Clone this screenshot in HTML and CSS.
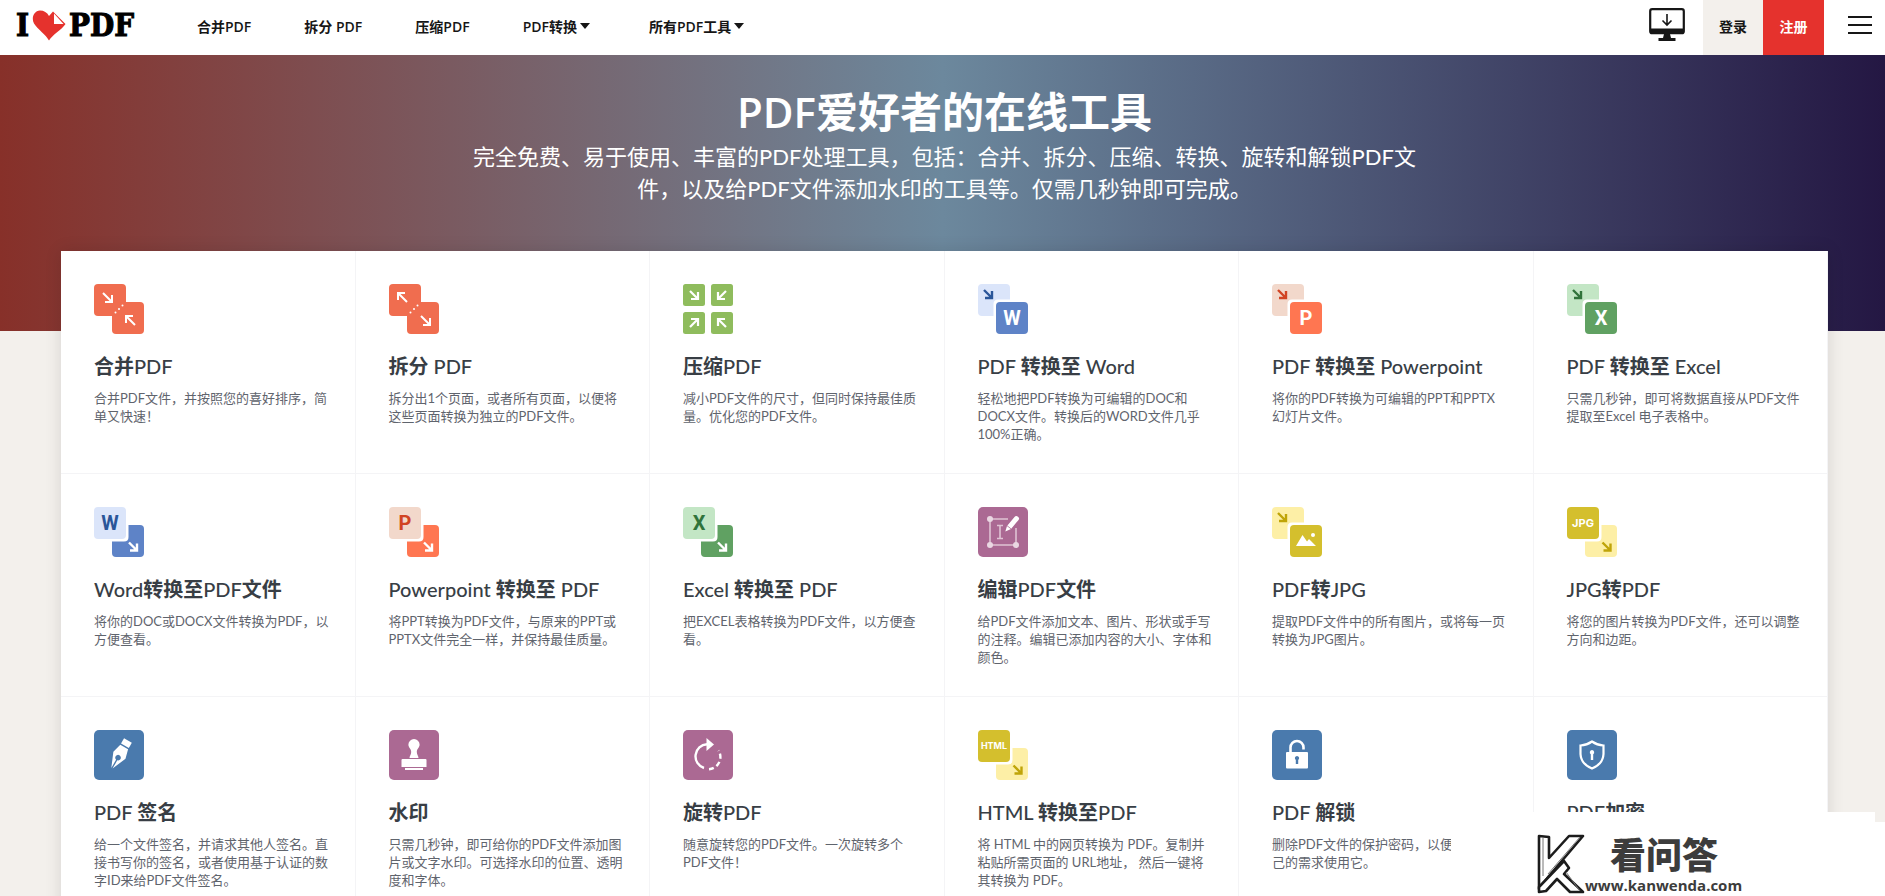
FILE: index.html
```html
<!DOCTYPE html>
<html lang="zh-CN">
<head>
<meta charset="utf-8">
<title>iLovePDF | PDF爱好者的在线工具</title>
<link rel="stylesheet" href="styles.css">
</head>
<body>
<svg class="defs" aria-hidden="true">
  <defs>
    <path id="arrow-se" d="M0 0 9 9M9 2V9H2" fill="none" stroke-width="2"/>
    <path id="arrow-nw" d="M9 9 0 0M0 7V0H7" fill="none" stroke-width="2"/>
    <path id="mini-se" d="M0 0 8 8M8 1V8H1" fill="none" stroke-width="2.4"/>
    <rect id="sheet" width="32" height="32" rx="4"/>
    <path id="front-a" d="M0 0H32Q34.500 0 34.500 3V30Q34.500 34.500 30 34.500H0Z" fill="#fff"/>
    <path id="front-b" d="M50 15.500H20Q15.500 15.500 15.500 20V50H50Z" fill="#fff"/>
  </defs>
</svg>

<header class="topbar">
  <a class="logo" href="#" aria-label="I love PDF">
    <span>I</span>
    <svg width="34" height="31" viewBox="0 0 34 31" aria-hidden="true">
      <path d="M17 30.500C14 25 6 19.500 2 13.500-.8 8.500 1.500 1 8 .6c4 0 7 2 9 5.400L21 1.400 33.500 14C30 19.500 20 25 17 30.500Z" fill="#e5322d"/>
      <path d="M22 3.500V14H31.500Z" fill="#fff"/>
    </svg>
    <span>PDF</span>
  </a>
  <nav class="menu">
    <a href="#">合并PDF</a>
    <a href="#">拆分 PDF</a>
    <a href="#">压缩PDF</a>
    <a href="#" class="drop">PDF转换</a>
    <a href="#" class="drop">所有PDF工具</a>
  </nav>
  <div class="actions">
    <a class="desktop" href="#" aria-label="桌面版">
      <svg width="36" height="34" viewBox="0 0 36 34">
        <rect x="1.200" y="1.200" width="33.600" height="24" rx="2" fill="#fff" stroke="#161616" stroke-width="2.200"/>
        <path d="M1 20.500H35V24a2 2 0 0 1-2 2H3a2 2 0 0 1-2-2ZM15 26H21L22 30H26.500V33H9.500V30H14Z" fill="#161616"/>
        <path d="M18 6V16.500M13.500 12.500 18 17 22.500 12.500" fill="none" stroke="#161616" stroke-width="1.600"/>
      </svg>
    </a>
    <a class="login" href="#">登录</a>
    <a class="signup" href="#">注册</a>
    <button class="burger" type="button" aria-label="菜单"><i></i><i></i><i></i></button>
  </div>
</header>

<main>
  <section class="hero">
    <h1><span>PDF</span>爱好者的在线工具</h1>
    <p>完全免费、易于使用、丰富的PDF处理工具，包括：合并、拆分、压缩、转换、旋转和解锁PDF文<br>件，以及给PDF文件添加水印的工具等。仅需几秒钟即可完成。</p>
  </section>

  <section class="tools">
    <a class="tool" href="#">
      <svg class="icon" viewBox="0 0 50 50"><g fill="#f06d4f"><use href="#sheet"/><use href="#sheet" x="18" y="18"/></g><g stroke="#fff"><use href="#arrow-se" x="9" y="9"/><use href="#arrow-nw" x="32" y="32"/></g><g fill="#fff"><circle cx="21.500" cy="28.500" r="1"/><circle cx="25" cy="25" r="1"/><circle cx="28.500" cy="21.500" r="1"/></g></svg>
      <h3><b>合并</b>PDF</h3>
      <p>合并PDF文件，并按照您的喜好排序，简<br>单又快速！</p>
    </a>
    <a class="tool" href="#">
      <svg class="icon" viewBox="0 0 50 50"><g fill="#f06d4f"><use href="#sheet"/><use href="#sheet" x="18" y="18"/></g><g stroke="#fff"><use href="#arrow-nw" x="9" y="9"/><use href="#arrow-se" x="32" y="32"/></g><g fill="#fff"><circle cx="21.500" cy="28.500" r="1"/><circle cx="25" cy="25" r="1"/><circle cx="28.500" cy="21.500" r="1"/></g></svg>
      <h3><b>拆分</b> PDF</h3>
      <p>拆分出1个页面，或者所有页面，以便将<br>这些页面转换为独立的PDF文件。</p>
    </a>
    <a class="tool" href="#">
      <svg class="icon" viewBox="0 0 50 50"><g fill="#8fbc5d"><rect width="22" height="22" rx="2.500"/><rect x="28" width="22" height="22" rx="2.500"/><rect y="28" width="22" height="22" rx="2.500"/><rect x="28" y="28" width="22" height="22" rx="2.500"/></g><path d="M7 7 15 15M15 8V15H8M43 7 35 15M35 8V15H42M7 43 15 35M8 35H15V42M43 43 35 35M42 35H35V42" fill="none" stroke="#fff" stroke-width="2.200"/></svg>
      <h3><b>压缩</b>PDF</h3>
      <p>减小PDF文件的尺寸，但同时保持最佳质<br>量。优化您的PDF文件。</p>
    </a>
    <a class="tool" href="#">
      <svg class="icon" viewBox="0 0 50 50"><use href="#sheet" fill="#dbe5fa"/><use href="#mini-se" x="6" y="6" stroke="#2a5699"/><use href="#front-b"/><use href="#sheet" x="18" y="18" fill="#5e83c7"/><text x="34" y="41" fill="#fff">W</text></svg>
      <h3>PDF <b>转换至</b> Word</h3>
      <p>轻松地把PDF转换为可编辑的DOC和<br>DOCX文件。转换后的WORD文件几乎<br>100%正确。</p>
    </a>
    <a class="tool" href="#">
      <svg class="icon" viewBox="0 0 50 50"><use href="#sheet" fill="#f2d8cb"/><use href="#mini-se" x="6" y="6" stroke="#d14424"/><use href="#front-b"/><use href="#sheet" x="18" y="18" fill="#ff7651"/><text x="34" y="41" fill="#fff">P</text></svg>
      <h3>PDF <b>转换至</b> Powerpoint</h3>
      <p>将你的PDF转换为可编辑的PPT和PPTX<br>幻灯片文件。</p>
    </a>
    <a class="tool" href="#">
      <svg class="icon" viewBox="0 0 50 50"><use href="#sheet" fill="#c3e6c5"/><use href="#mini-se" x="6" y="6" stroke="#30733a"/><use href="#front-b"/><use href="#sheet" x="18" y="18" fill="#60a162"/><text x="34" y="41" fill="#fff">X</text></svg>
      <h3>PDF <b>转换至</b> Excel</h3>
      <p>只需几秒钟，即可将数据直接从PDF文件<br>提取至Excel 电子表格中。</p>
    </a>

    <a class="tool" href="#">
      <svg class="icon" viewBox="0 0 50 50"><use href="#sheet" x="18" y="18" fill="#5e83c7"/><use href="#front-a"/><use href="#sheet" fill="#dbe5fa"/><text x="16" y="23" fill="#2a5699">W</text><use href="#mini-se" x="35" y="35.500" stroke="#fff"/></svg>
      <h3>Word<b>转换至</b>PDF<b>文件</b></h3>
      <p>将你的DOC或DOCX文件转换为PDF，以<br>方便查看。</p>
    </a>
    <a class="tool" href="#">
      <svg class="icon" viewBox="0 0 50 50"><use href="#sheet" x="18" y="18" fill="#ff7651"/><use href="#front-a"/><use href="#sheet" fill="#f2d8cb"/><text x="16" y="23" fill="#d14424">P</text><use href="#mini-se" x="35" y="35.500" stroke="#fff"/></svg>
      <h3>Powerpoint <b>转换至</b> PDF</h3>
      <p>将PPT转换为PDF文件，与原来的PPT或<br>PPTX文件完全一样，并保持最佳质量。</p>
    </a>
    <a class="tool" href="#">
      <svg class="icon" viewBox="0 0 50 50"><use href="#sheet" x="18" y="18" fill="#60a162"/><use href="#front-a"/><use href="#sheet" fill="#c3e6c5"/><text x="16" y="23" fill="#30733a">X</text><use href="#mini-se" x="35" y="35.500" stroke="#fff"/></svg>
      <h3>Excel <b>转换至</b> PDF</h3>
      <p>把EXCEL表格转换为PDF文件，以方便查<br>看。</p>
    </a>
    <a class="tool" href="#">
      <svg class="icon" viewBox="0 0 50 50"><rect width="50" height="50" rx="5" fill="#ab6993"/><g fill="none" stroke="#dfc3d4" stroke-width="1.600"><path d="M30 12H12V38H38V21"/><path d="M19 18.500H25M19 31.500H25M22 18.500V31.500"/></g><g fill="#ead7e2"><circle cx="12" cy="12" r="3"/><circle cx="12" cy="38" r="3"/><circle cx="38" cy="38" r="3"/></g><path d="M36.500 10Q38 8.200 40 9.800 42 11.300 40.500 13L33 22 27.300 24.500 29 19Z" fill="#fff"/><path d="M28.800 18.500 33.500 22.200" stroke="#ab6993" stroke-width=".8"/></svg>
      <h3><b>编辑</b>PDF<b>文件</b></h3>
      <p>给PDF文件添加文本、图片、形状或手写<br>的注释。编辑已添加内容的大小、字体和<br>颜色。</p>
    </a>
    <a class="tool" href="#">
      <svg class="icon" viewBox="0 0 50 50"><use href="#sheet" fill="#fdefa6"/><use href="#mini-se" x="6" y="6" stroke="#bfa408"/><use href="#front-b"/><use href="#sheet" x="18" y="18" fill="#d4bf2d"/><path d="M24 39 30.500 28 35 34.500 37 32 44 39Z" fill="#fff"/><circle cx="41" cy="28" r="2" fill="#fff"/></svg>
      <h3>PDF<b>转</b>JPG</h3>
      <p>提取PDF文件中的所有图片，或将每一页<br>转换为JPG图片。</p>
    </a>
    <a class="tool" href="#">
      <svg class="icon" viewBox="0 0 50 50"><use href="#sheet" x="18" y="18" fill="#fdefa6"/><use href="#front-a"/><use href="#sheet" fill="#d4bf2d"/><text class="word" x="16" y="20" fill="#fff">JPG</text><use href="#mini-se" x="35.500" y="35.500" stroke="#bfa408"/></svg>
      <h3>JPG<b>转</b>PDF</h3>
      <p>将您的图片转换为PDF文件，还可以调整<br>方向和边距。</p>
    </a>

    <a class="tool" href="#">
      <svg class="icon" viewBox="0 0 50 50"><rect width="50" height="50" rx="5" fill="#4a7aad"/><g transform="rotate(30 25 25)" fill="#fff"><path d="M21 8H30V14H21Z"/><path d="M21 15.500H30L32.500 25 26.200 40V30.500A2.800 2.800 0 1 0 24.800 30.500V40L18.500 25Z"/></g></svg>
      <h3>PDF <b>签名</b></h3>
      <p>给一个文件签名，并请求其他人签名。直<br>接书写你的签名，或者使用基于认证的数<br>字ID来给PDF文件签名。</p>
    </a>
    <a class="tool" href="#">
      <svg class="icon" viewBox="0 0 50 50"><rect width="50" height="50" rx="5" fill="#ab6993"/><path d="M25 9A5.600 5.600 0 0 1 30.600 14.600C30.600 18 27.800 18.500 27.800 22 27.800 25 29.500 25.500 29.500 28H20.500C20.500 25.500 22.200 25 22.200 22 22.200 18.500 19.400 18 19.400 14.600A5.600 5.600 0 0 1 25 9ZM13.500 29H36.500Q37.500 29 37.500 30V37H12.500V30Q12.500 29 13.500 29ZM16 38H34V40H16Z" fill="#fff"/></svg>
      <h3><b>水印</b></h3>
      <p>只需几秒钟，即可给你的PDF文件添加图<br>片或文字水印。可选择水印的位置、透明<br>度和字体。</p>
    </a>
    <a class="tool" href="#">
      <svg class="icon" viewBox="0 0 50 50"><rect width="50" height="50" rx="5" fill="#ab6993"/><path d="M24 14.200A12.200 12.200 0 0 0 21 38" fill="none" stroke="#fff" stroke-width="2.400"/><path d="M26 39.200A12.200 12.200 0 0 0 35.500 20.500" fill="none" stroke="#fff" stroke-width="2.400" stroke-dasharray="5 3.200"/><path d="M23.500 8 31 14.500 23.500 21Z" fill="#fff"/></svg>
      <h3><b>旋转</b>PDF</h3>
      <p>随意旋转您的PDF文件。一次旋转多个<br>PDF文件！</p>
    </a>
    <a class="tool" href="#">
      <svg class="icon" viewBox="0 0 50 50"><use href="#sheet" x="18" y="18" fill="#fdefa6"/><use href="#front-a"/><use href="#sheet" fill="#d4bf2d"/><text class="word small" x="16" y="19" fill="#fff">HTML</text><use href="#mini-se" x="35.500" y="35.500" stroke="#bfa408"/></svg>
      <h3>HTML <b>转换至</b>PDF</h3>
      <p>将 HTML 中的网页转换为 PDF。复制并<br>粘贴所需页面的 URL地址， 然后一键将<br>其转换为 PDF。</p>
    </a>
    <a class="tool" href="#">
      <svg class="icon" viewBox="0 0 50 50"><rect width="50" height="50" rx="5" fill="#4a7aad"/><path d="M18.500 23V17.500A6.500 6.500 0 0 1 31.500 17.500V19.500" fill="none" stroke="#fff" stroke-width="2.600"/><rect x="14" y="22" width="22" height="16.500" rx="1" fill="#fff"/><path d="M25 26A2.200 2.200 0 0 1 26.200 30V34H23.800V30A2.200 2.200 0 0 1 25 26Z" fill="#4a7aad"/></svg>
      <h3>PDF <b>解锁</b></h3>
      <p>删除PDF文件的保护密码，以便您<br>己的需求使用它。</p>
    </a>
    <a class="tool" href="#">
      <svg class="icon" viewBox="0 0 50 50"><rect width="50" height="50" rx="5" fill="#4a7aad"/><path d="M25 11.500Q30 15 36.500 15.500V24Q36 34 25 38.500 14 34 13.500 24V15.500Q20 15 25 11.500Z" fill="none" stroke="#fff" stroke-width="2.200"/><path d="M25 20A2.300 2.300 0 0 1 26.200 24.200V30H23.800V24.200A2.300 2.300 0 0 1 25 20Z" fill="#fff"/></svg>
      <h3>PDF<b>加密</b></h3>
    </a>
  </section>
</main>

<aside class="stamp">
  <div class="stamp-back"></div>
  <div class="stamp-body">
    <svg width="50" height="62" viewBox="0 0 50 62" aria-hidden="true">
      <g fill="#fff" stroke="#1c1c1c" stroke-width="2.600" stroke-linejoin="round">
        <path d="M4 4 14 5V26L34 4H48L14 44 4 57Z"/>
        <path d="M4 60V55L29 29 34 36 29 42 48 60H35L22 47 11 59Z"/>
      </g>
      <path d="M8 6V44M45 5 13 42M31 40 45 59" fill="none" stroke="#777" stroke-width="1"/>
    </svg>
    <div class="stamp-text">
      <strong>看问答</strong>
      <span>www.kanwenda.com</span>
    </div>
  </div>
</aside>
</body>
</html>
```

FILE: styles.css
```css
* { box-sizing: border-box; }

body {
  position: relative;
  margin: 0;
  height: 100vh;
  overflow: hidden;
  background: #f3f0ec;
  color: #161616;
  font-family: Lato, "Noto Sans CJK SC", sans-serif;
}

a { color: inherit; text-decoration: none; }
h1, h3, p { margin: 0; }
.defs { position: absolute; width: 0; height: 0; }

.topbar {
  display: flex;
  height: 55px;
  background: #fff;
}

.logo {
  display: flex;
  align-items: center;
  gap: 3px;
  width: 197px;
  padding: 0 0 5px 16px;
  color: #000;
  font: bold 31px/40px "DejaVu Serif Condensed", "DejaVu Serif", serif;
  -webkit-text-stroke: 1px #000;
}

.menu {
  display: flex;
  align-items: center;
  gap: 53px;
  padding-bottom: 3px;
  font-family: "Open Sans", "Noto Sans CJK SC", sans-serif;
  font-size: 14px;
  font-weight: 600;
}

.drop { display: flex; align-items: center; gap: 3px; margin-right: 6px; }
.drop::after {
  content: "";
  border: 5px solid transparent;
  border-top: 6px solid #161616;
  border-bottom: 0;
}

.actions {
  display: flex;
  margin-left: auto;
  font-size: 14px;
  font-weight: 700;
}
.desktop { padding: 8px 18px 0 0; }
.login, .signup {
  display: flex;
  align-items: center;
  justify-content: center;
  padding-bottom: 3px;
}
.login { width: 60px; background: #f3f0ec; }
.signup { width: 61px; background: #e5322d; color: #fff; }
.burger {
  display: flex;
  flex-direction: column;
  gap: 6px;
  width: 61px;
  padding: 16px 13px 0 24px;
  border: 0;
  background: none;
}
.burger i { height: 2px; background: #161616; width: 100%; }

.hero {
  height: 276px;
  padding: 31px 0 0 4px;
  background: linear-gradient(90deg, #873029, #6c889d 50%, #241743);
  color: #fff;
  text-align: center;
}
.hero h1 { font-size: 42px; line-height: 52px; font-weight: 700; }
.hero h1 span { font-family: "Open Sans", sans-serif; font-weight: 600; }
.hero p {
  margin-top: 3px;
  font-size: 22px;
  line-height: 32px;
}

.tools {
  display: grid;
  grid-template-columns: repeat(6, 1fr);
  margin: -80px 57px 0 61px;
  background: #fff;
  box-shadow: 0 0 16px rgba(0, 0, 0, 0.12);
}

.tool {
  padding: 33px 0 30px 33px;
  border-right: 1px solid #f4f4f6;
  border-bottom: 1px solid #f4f4f6;
  white-space: nowrap;
}
.icon { display: block; width: 50px; height: 50px; }
.icon text {
  font: bold 20px Roboto, sans-serif;
  text-anchor: middle;
}
.icon .word { font: bold 11px Inter, sans-serif; }
.icon .small { font-size: 9px; }

.tool h3 {
  margin-top: 19px;
  color: #383e45;
  font-size: 20px;
  line-height: 26px;
  font-weight: 500;
}
.tool p {
  margin-top: 10px;
  color: #5f646d;
  font-size: 13px;
  line-height: 18px;
  font-weight: 400;
}

.stamp {
  position: absolute;
  right: 0;
  bottom: 0;
  width: 434px;
  height: 84px;
}
.stamp-back {
  position: absolute;
  right: 0;
  bottom: 0;
  width: 100%;
  height: 74px;
  background: #fff;
}
.stamp-body {
  position: relative;
  display: flex;
  height: 84px;
  margin-right: 10px;
  padding: 20px 0 0 84px;
  background: #fff;
}
.stamp-text {
  display: flex;
  flex-direction: column;
  color: #3c3c3c;
}
.stamp-text strong {
  padding-left: 25px;
  font: 900 36px/42px "Noto Sans CJK SC", sans-serif;
}
.stamp-text span { font: bold 15px/22px "Open Sans", sans-serif; }
```
